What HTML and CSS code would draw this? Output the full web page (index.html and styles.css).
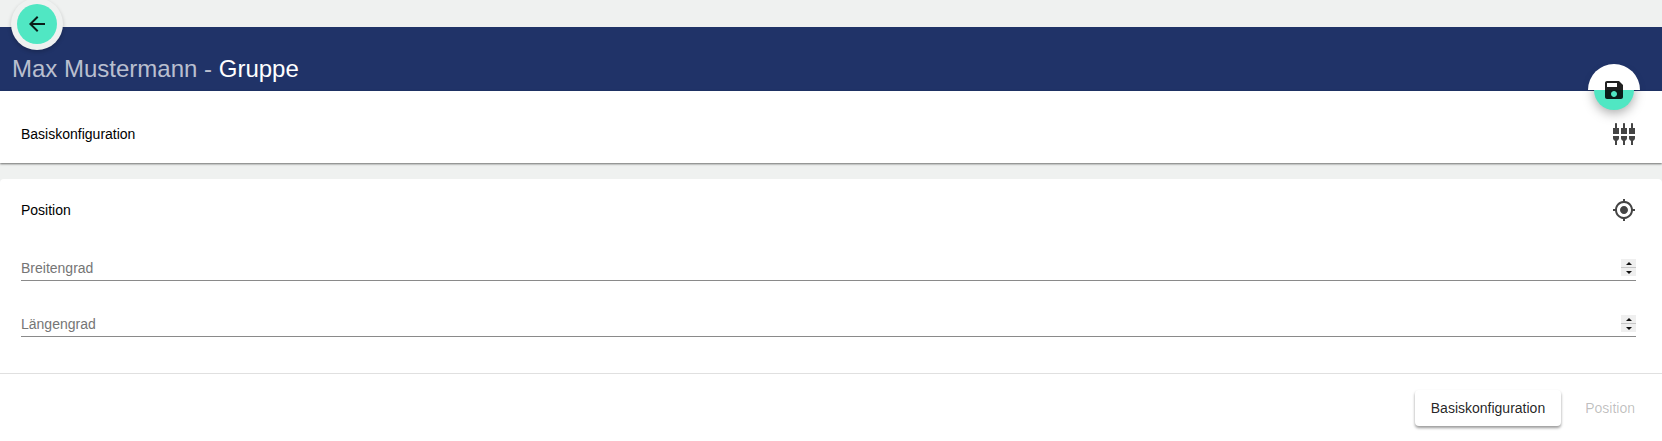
FILE: index.html
```html
<!DOCTYPE html>
<html lang="en">
<head>
    <meta charset="UTF-8">
    <title>Gruppe</title>
    <link rel="stylesheet" href="styles.css">
</head>
<body>

<div class="topbar"></div>

<div class="header">
    <h1><span class="name">Max Mustermann - </span>Gruppe</h1>
</div>

<button class="fab fab-back" aria-label="back">
    <svg viewBox="0 0 24 24"><path d="M20 11H7.83l5.59-5.59L12 4l-8 8 8 8 1.41-1.41L7.83 13H20v-2z"/></svg>
</button>
<button class="fab fab-save" aria-label="save">
    <svg viewBox="0 0 24 24"><path d="M17 3H5c-1.11 0-2 .9-2 2v14c0 1.1.89 2 2 2h14c1.1 0 2-.9 2-2V7l-4-4zm-5 16c-1.66 0-3-1.34-3-3s1.34-3 3-3 3 1.34 3 3-1.34 3-3 3zm3-10H5V5h10v4z"/></svg>
</button>

<div class="panel panel-closed">
    <div class="panel-head">
        <span>Basiskonfiguration</span>
        <svg class="icon" viewBox="0 0 24 24"><path d="M5 2c0-.55-.45-1-1-1s-1 .45-1 1v4H1v6h6V6H5V2zm4 14c0 1.3.84 2.4 2 2.82V23h2v-4.18c1.16-.41 2-1.51 2-2.82v-2H9v2zm-8 0c0 1.3.84 2.4 2 2.82V23h2v-4.18C6.16 18.4 7 17.3 7 16v-2H1v2zM21 6V2c0-.55-.45-1-1-1s-1 .45-1 1v4h-2v6h6V6h-2zm-8-4c0-.55-.45-1-1-1s-1 .45-1 1v4H9v6h6V6h-2V2zm4 14c0 1.3.84 2.4 2 2.82V23h2v-4.18c1.16-.41 2-1.51 2-2.82v-2h-6v2z"/></svg>
    </div>
</div>

<div class="panel panel-open">
    <div class="panel-head">
        <span>Position</span>
        <svg class="icon" viewBox="0 0 24 24"><path d="M12 8c-2.21 0-4 1.79-4 4s1.79 4 4 4 4-1.79 4-4-1.79-4-4-4zm8.94 3c-.46-4.17-3.77-7.48-7.94-7.94V1h-2v2.06C6.83 3.52 3.52 6.83 3.06 11H1v2h2.06c.46 4.17 3.77 7.48 7.94 7.94V23h2v-2.06c4.17-.46 7.48-3.77 7.94-7.94H23v-2h-2.06zM12 19c-3.87 0-7-3.13-7-7s3.13-7 7-7 7 3.13 7 7-3.13 7-7 7z"/></svg>
    </div>

    <div class="fields">
        <div class="field">
            <input type="text" placeholder="Breitengrad">
            <div class="spinner"><span class="up"></span><span class="down"></span></div>
        </div>
        <div class="field">
            <input type="text" placeholder="Längengrad">
            <div class="spinner"><span class="up"></span><span class="down"></span></div>
        </div>
    </div>

    <div class="actions">
        <button class="btn btn-raised">Basiskonfiguration</button>
        <button class="btn btn-disabled" disabled>Position</button>
    </div>
</div>

</body>
</html>
```

FILE: styles.css
```css
html, body {
    height: 100%;
}
body {
    margin: 0;
    background: #eff1f0;
    font-family: "Liberation Sans", Arial, sans-serif;
    font-size: 14px;
    color: #000;
    overflow: hidden;
}
button {
    font-family: inherit;
}
.topbar {
    height: 27px;
}
.header {
    height: 64px;
    box-sizing: border-box;
    padding: 28px 12px 0;
    background: #203368;
}
h1 {
    margin: 0;
    font-size: 24px;
    font-weight: normal;
    line-height: 28px;
    color: #fff;
}
.name {
    color: rgba(255, 255, 255, .7);
}
.fab {
    position: absolute;
    width: 40px;
    height: 40px;
    padding: 8px;
    border: 0;
    border-radius: 50%;
    background: #50e7c3;
    box-sizing: border-box;
}
.fab svg {
    display: block;
    width: 24px;
    height: 24px;
    fill: rgba(0, 0, 0, .87);
}
.fab-back {
    left: 17px;
    top: 4px;
    box-shadow: 0 0 0 6px #eff1f0, 0 2px 4px 6px rgba(0, 0, 0, .2);
    clip-path: circle(34px);
}
.fab-save {
    left: 1594px;
    top: 70px;
    z-index: 2;
    box-shadow: 0 3px 12px rgba(0, 0, 0, .35);
}
.fab-save::before {
    content: "";
    position: absolute;
    left: -6px;
    top: -6px;
    width: 52px;
    height: 26px;
    border-radius: 26px 26px 0 0;
    background: #fff;
    z-index: -1;
}
.panel {
    background: #fff;
}
.panel-closed {
    height: 72px;
    box-shadow: 0 1px 2px rgba(0, 0, 0, .55);
    position: relative;
}
.panel-open {
    margin-top: 16px;
    height: 262px;
    border-radius: 4px 4px 0 0;
}
.panel-head {
    display: flex;
    justify-content: space-between;
    align-items: center;
    padding: 0 26px 0 21px;
}
.panel-closed .panel-head {
    height: 72px;
    padding-top: 14px;
    box-sizing: border-box;
}
.panel-open .panel-head {
    height: 62px;
}
.icon {
    width: 24px;
    height: 24px;
    fill: #444;
}
.fields {
    padding: 0 26px 0 21px;
    height: 132px;
    box-sizing: border-box;
    border-bottom: 0;
}
.field {
    display: flex;
    align-items: flex-end;
    height: 40px;
    margin-bottom: 16px;
    border-bottom: 1px solid #8a8a8a;
    box-sizing: border-box;
}
input {
    flex: 1;
    border: 0;
    outline: 0;
    padding: 0 0 4px;
    font: inherit;
    color: #000;
    background: transparent;
}
input::placeholder {
    color: #757575;
    opacity: 1;
}
.spinner {
    display: flex;
    flex-direction: column;
    justify-content: space-between;
    width: 15px;
    height: 17px;
    margin-bottom: 4px;
    background: #c6c6c6;
}
.spinner span {
    display: flex;
    align-items: center;
    justify-content: center;
    height: 8px;
    background: #efefef;
}
.spinner span::after {
    content: "";
    border-left: 3px solid transparent;
    border-right: 3px solid transparent;
}
.spinner .up::after {
    border-bottom: 3px solid #111;
}
.spinner .down::after {
    border-top: 3px solid #111;
}
.actions {
    display: flex;
    justify-content: flex-end;
    align-items: center;
    gap: 8px;
    padding: 16px 11px 0 0;
    border-top: 1px solid #e0e0e0;
}
.btn {
    height: 36px;
    padding: 0 16px;
    border: 0;
    border-radius: 4px;
    background: #fff;
    font-size: 14px;
    color: rgba(0, 0, 0, .87);
}
.btn-raised {
    box-shadow: 0 2px 3px rgba(0, 0, 0, .4);
}
.btn-disabled {
    color: rgba(0, 0, 0, .26);
}
```
